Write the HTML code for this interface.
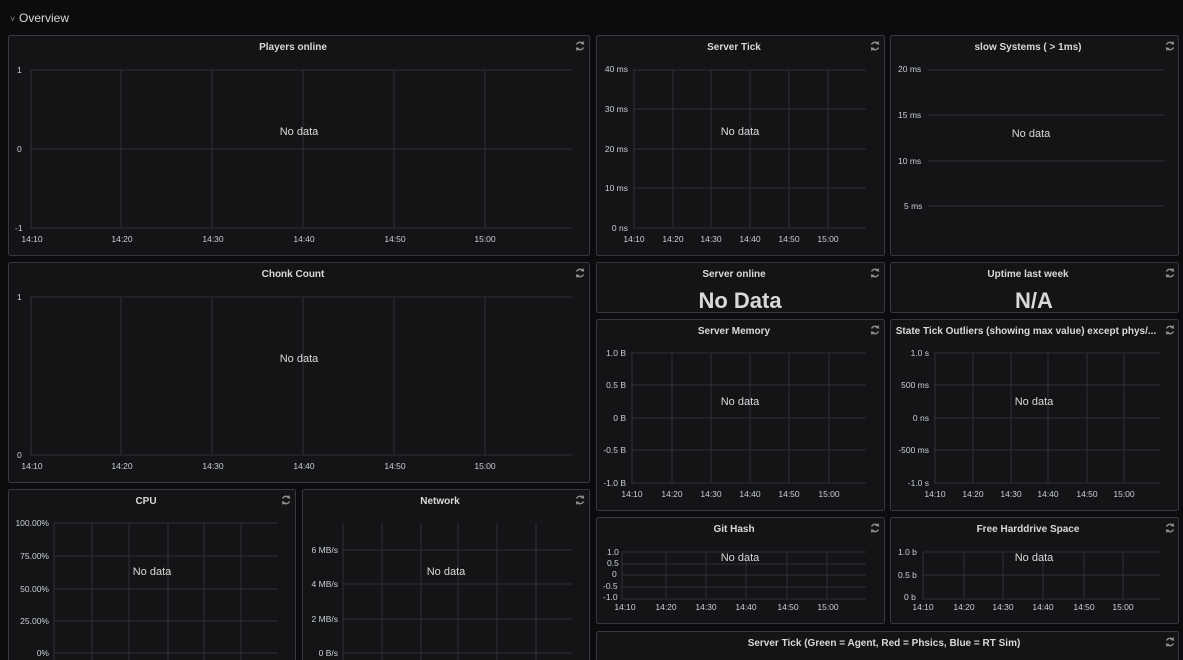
<!DOCTYPE html>
<html><head><meta charset="utf-8"><style>
html,body{margin:0;padding:0;background:#0b0c0e;width:1183px;height:660px;overflow:hidden}
svg{display:block}
text{font-family:"Liberation Sans",sans-serif}
.t{fill:#d8d9da;font-size:10px;font-weight:bold;text-anchor:middle}
.a{fill:#c7d0d9;font-size:8.5px}
.ar{fill:#c7d0d9;font-size:8.5px;text-anchor:end}
.ax{fill:#c7d0d9;font-size:8.5px;text-anchor:middle}
.nd{fill:#d8d9da;font-size:11px;text-anchor:middle}
.p{fill:#141416;stroke:#38393d;stroke-width:1}
.g line{stroke:#303135;stroke-width:1}
.big{fill:#d8d9da;font-size:22px;font-weight:bold;text-anchor:middle}
.r{fill:none;stroke:#8e8e8e;stroke-width:1.4}
</style></head><body>
<svg width="1183" height="660" xmlns="http://www.w3.org/2000/svg">
<defs>
<g id="ref"><path class="r" d="M-3.5,-1.5 A4,4 0 0 1 3,-2.5 M3.5,1.5 A4,4 0 0 1 -3,2.5"/><path d="M3.5,-5 L4.3,-1.2 L0.3,-2 Z M-3.5,5 L-4.3,1.2 L-0.3,2 Z" fill="#8e8e8e"/></g>
</defs>
<text x="10" y="22" fill="#8e8e8e" font-size="9">˅</text>
<text x="19" y="22" fill="#d8d9da" font-size="12" font-family="Liberation Sans">Overview</text>

<rect class="p" x="8.5" y="35.5" width="581" height="220" rx="2"/>
<text class="t" x="293" y="50">Players online</text><use href="#ref" x="580" y="46"/>
<g class="g"><line x1="30" y1="70" x2="572" y2="70"/><line x1="30" y1="149" x2="572" y2="149"/><line x1="30" y1="228" x2="572" y2="228"/>
<line x1="31" y1="70" x2="31" y2="228"/><line x1="121" y1="70" x2="121" y2="228"/><line x1="212" y1="70" x2="212" y2="228"/><line x1="303" y1="70" x2="303" y2="228"/><line x1="394" y1="70" x2="394" y2="228"/><line x1="485" y1="70" x2="485" y2="228"/></g>
<text class="a" x="17" y="73">1</text><text class="a" x="17" y="152">0</text><text class="a" x="15" y="231">-1</text>
<text class="ax" x="32" y="242">14:10</text><text class="ax" x="122" y="242">14:20</text><text class="ax" x="213" y="242">14:30</text><text class="ax" x="304" y="242">14:40</text><text class="ax" x="395" y="242">14:50</text><text class="ax" x="485" y="242">15:00</text>
<text class="nd" x="299" y="135">No data</text>

<rect class="p" x="596.5" y="35.5" width="288" height="220" rx="2"/>
<text class="t" x="734" y="50">Server Tick</text><use href="#ref" x="875" y="46"/>
<g class="g"><line x1="633" y1="70" x2="866" y2="70"/><line x1="633" y1="109" x2="866" y2="109"/><line x1="633" y1="149" x2="866" y2="149"/><line x1="633" y1="188" x2="866" y2="188"/><line x1="633" y1="228" x2="866" y2="228"/>
<line x1="634" y1="70" x2="634" y2="228"/><line x1="673" y1="70" x2="673" y2="228"/><line x1="711" y1="70" x2="711" y2="228"/><line x1="750" y1="70" x2="750" y2="228"/><line x1="789" y1="70" x2="789" y2="228"/><line x1="828" y1="70" x2="828" y2="228"/></g>
<text class="ar" x="628" y="72">40 ms</text><text class="ar" x="628" y="112">30 ms</text><text class="ar" x="628" y="152">20 ms</text><text class="ar" x="628" y="191">10 ms</text><text class="ar" x="628" y="231">0 ns</text>
<text class="ax" x="634" y="242">14:10</text><text class="ax" x="673" y="242">14:20</text><text class="ax" x="711" y="242">14:30</text><text class="ax" x="750" y="242">14:40</text><text class="ax" x="789" y="242">14:50</text><text class="ax" x="828" y="242">15:00</text>
<text class="nd" x="740" y="135">No data</text>

<rect class="p" x="890.5" y="35.5" width="288" height="220" rx="2"/>
<text class="t" x="1028" y="50">slow Systems ( &gt; 1ms)</text><use href="#ref" x="1170" y="46"/>
<g class="g"><line x1="928" y1="70" x2="1165" y2="70"/><line x1="928" y1="115" x2="1165" y2="115"/><line x1="928" y1="161" x2="1165" y2="161"/><line x1="928" y1="206" x2="1165" y2="206"/></g>
<text class="a" x="898" y="72">20 ms</text><text class="a" x="898" y="118">15 ms</text><text class="a" x="898" y="164">10 ms</text><text class="a" x="904" y="209">5 ms</text>
<text class="nd" x="1031" y="137">No data</text>

<rect class="p" x="8.5" y="262.5" width="581" height="220" rx="2"/>
<text class="t" x="293" y="277">Chonk Count</text><use href="#ref" x="580" y="273"/>
<g class="g"><line x1="30" y1="297" x2="572" y2="297"/><line x1="30" y1="455" x2="572" y2="455"/>
<line x1="31" y1="297" x2="31" y2="455"/><line x1="121" y1="297" x2="121" y2="455"/><line x1="212" y1="297" x2="212" y2="455"/><line x1="303" y1="297" x2="303" y2="455"/><line x1="394" y1="297" x2="394" y2="455"/><line x1="485" y1="297" x2="485" y2="455"/></g>
<text class="a" x="17" y="300">1</text><text class="a" x="17" y="458">0</text>
<text class="ax" x="32" y="469">14:10</text><text class="ax" x="122" y="469">14:20</text><text class="ax" x="213" y="469">14:30</text><text class="ax" x="304" y="469">14:40</text><text class="ax" x="395" y="469">14:50</text><text class="ax" x="485" y="469">15:00</text>
<text class="nd" x="299" y="362">No data</text>

<rect class="p" x="596.5" y="262.5" width="288" height="50" rx="2"/>
<text class="t" x="734" y="277">Server online</text><use href="#ref" x="875" y="273"/>
<text class="big" x="740" y="308">No Data</text>
<rect class="p" x="890.5" y="262.5" width="288" height="50" rx="2"/>
<text class="t" x="1028" y="277">Uptime last week</text><use href="#ref" x="1170" y="273"/>
<text class="big" x="1034" y="308">N/A</text>

<rect class="p" x="596.5" y="319.5" width="288" height="191" rx="2"/>
<text class="t" x="734" y="334">Server Memory</text><use href="#ref" x="875" y="330"/>
<g class="g"><line x1="631" y1="353" x2="866" y2="353"/><line x1="631" y1="385" x2="866" y2="385"/><line x1="631" y1="418" x2="866" y2="418"/><line x1="631" y1="450" x2="866" y2="450"/><line x1="631" y1="483" x2="866" y2="483"/>
<line x1="632" y1="353" x2="632" y2="483"/><line x1="672" y1="353" x2="672" y2="483"/><line x1="711" y1="353" x2="711" y2="483"/><line x1="750" y1="353" x2="750" y2="483"/><line x1="789" y1="353" x2="789" y2="483"/><line x1="829" y1="353" x2="829" y2="483"/></g>
<text class="ar" x="626" y="356">1.0 B</text><text class="ar" x="626" y="388">0.5 B</text><text class="ar" x="626" y="421">0 B</text><text class="ar" x="626" y="453">-0.5 B</text><text class="ar" x="626" y="486">-1.0 B</text>
<text class="ax" x="632" y="497">14:10</text><text class="ax" x="672" y="497">14:20</text><text class="ax" x="711" y="497">14:30</text><text class="ax" x="750" y="497">14:40</text><text class="ax" x="789" y="497">14:50</text><text class="ax" x="829" y="497">15:00</text>
<text class="nd" x="740" y="405">No data</text>

<rect class="p" x="890.5" y="319.5" width="288" height="191" rx="2"/>
<text class="t" x="1026" y="334">State Tick Outliers (showing max value) except phys/...</text><use href="#ref" x="1170" y="330"/>
<g class="g"><line x1="934" y1="353" x2="1160" y2="353"/><line x1="934" y1="385" x2="1160" y2="385"/><line x1="934" y1="418" x2="1160" y2="418"/><line x1="934" y1="450" x2="1160" y2="450"/><line x1="934" y1="483" x2="1160" y2="483"/>
<line x1="935" y1="353" x2="935" y2="483"/><line x1="973" y1="353" x2="973" y2="483"/><line x1="1011" y1="353" x2="1011" y2="483"/><line x1="1048" y1="353" x2="1048" y2="483"/><line x1="1087" y1="353" x2="1087" y2="483"/><line x1="1124" y1="353" x2="1124" y2="483"/></g>
<text class="ar" x="929" y="356">1.0 s</text><text class="ar" x="929" y="388">500 ms</text><text class="ar" x="929" y="421">0 ns</text><text class="ar" x="929" y="453">-500 ms</text><text class="ar" x="929" y="486">-1.0 s</text>
<text class="ax" x="935" y="497">14:10</text><text class="ax" x="973" y="497">14:20</text><text class="ax" x="1011" y="497">14:30</text><text class="ax" x="1048" y="497">14:40</text><text class="ax" x="1087" y="497">14:50</text><text class="ax" x="1124" y="497">15:00</text>
<text class="nd" x="1034" y="405">No data</text>

<rect class="p" x="8.5" y="489.5" width="287" height="180" rx="2"/>
<text class="t" x="146" y="504">CPU</text><use href="#ref" x="286" y="500"/>
<g class="g"><line x1="54" y1="523" x2="278" y2="523"/><line x1="54" y1="556" x2="278" y2="556"/><line x1="54" y1="589" x2="278" y2="589"/><line x1="54" y1="621" x2="278" y2="621"/><line x1="54" y1="653" x2="278" y2="653"/>
<line x1="54" y1="523" x2="54" y2="660"/><line x1="92" y1="523" x2="92" y2="660"/><line x1="129" y1="523" x2="129" y2="660"/><line x1="168" y1="523" x2="168" y2="660"/><line x1="204" y1="523" x2="204" y2="660"/><line x1="241" y1="523" x2="241" y2="660"/></g>
<text class="ar" x="49" y="526">100.00%</text><text class="ar" x="49" y="559">75.00%</text><text class="ar" x="49" y="592">50.00%</text><text class="ar" x="49" y="624">25.00%</text><text class="ar" x="49" y="656">0%</text>
<text class="nd" x="152" y="575">No data</text>

<rect class="p" x="302.5" y="489.5" width="287" height="180" rx="2"/>
<text class="t" x="440" y="504">Network</text><use href="#ref" x="580" y="500"/>
<g class="g"><line x1="343" y1="550" x2="572" y2="550"/><line x1="343" y1="584" x2="572" y2="584"/><line x1="343" y1="619" x2="572" y2="619"/><line x1="343" y1="653" x2="572" y2="653"/>
<line x1="343" y1="523" x2="343" y2="660"/><line x1="382" y1="523" x2="382" y2="660"/><line x1="421" y1="523" x2="421" y2="660"/><line x1="458" y1="523" x2="458" y2="660"/><line x1="497" y1="523" x2="497" y2="660"/><line x1="536" y1="523" x2="536" y2="660"/></g>
<text class="ar" x="338" y="553">6 MB/s</text><text class="ar" x="338" y="587">4 MB/s</text><text class="ar" x="338" y="622">2 MB/s</text><text class="ar" x="338" y="656">0 B/s</text>
<text class="nd" x="446" y="575">No data</text>

<rect class="p" x="596.5" y="517.5" width="288" height="106" rx="2"/>
<text class="t" x="734" y="532">Git Hash</text><use href="#ref" x="875" y="528"/>
<g class="g"><line x1="622" y1="552" x2="866" y2="552"/><line x1="622" y1="564" x2="866" y2="564"/><line x1="622" y1="575" x2="866" y2="575"/><line x1="622" y1="587" x2="866" y2="587"/><line x1="622" y1="599" x2="866" y2="599"/>
<line x1="622" y1="552" x2="622" y2="599"/><line x1="666" y1="552" x2="666" y2="599"/><line x1="706" y1="552" x2="706" y2="599"/><line x1="746" y1="552" x2="746" y2="599"/><line x1="787" y1="552" x2="787" y2="599"/><line x1="827" y1="552" x2="827" y2="599"/></g>
<text class="a" x="607" y="555">1.0</text><text class="a" x="607" y="566">0.5</text><text class="a" x="612" y="577">0</text><text class="a" x="603" y="589">-0.5</text><text class="a" x="603" y="600">-1.0</text>
<text class="ax" x="625" y="610">14:10</text><text class="ax" x="666" y="610">14:20</text><text class="ax" x="706" y="610">14:30</text><text class="ax" x="746" y="610">14:40</text><text class="ax" x="788" y="610">14:50</text><text class="ax" x="828" y="610">15:00</text>
<text class="nd" x="740" y="561">No data</text>

<rect class="p" x="890.5" y="517.5" width="288" height="106" rx="2"/>
<text class="t" x="1028" y="532">Free Harddrive Space</text><use href="#ref" x="1170" y="528"/>
<g class="g"><line x1="923" y1="552" x2="1160" y2="552"/><line x1="923" y1="575" x2="1160" y2="575"/><line x1="923" y1="599" x2="1160" y2="599"/>
<line x1="923" y1="552" x2="923" y2="599"/><line x1="964" y1="552" x2="964" y2="599"/><line x1="1003" y1="552" x2="1003" y2="599"/><line x1="1043" y1="552" x2="1043" y2="599"/><line x1="1084" y1="552" x2="1084" y2="599"/><line x1="1123" y1="552" x2="1123" y2="599"/></g>
<text class="a" x="898" y="555">1.0 b</text><text class="a" x="898" y="578">0.5 b</text><text class="a" x="904" y="600">0 b</text>
<text class="ax" x="923" y="610">14:10</text><text class="ax" x="964" y="610">14:20</text><text class="ax" x="1003" y="610">14:30</text><text class="ax" x="1043" y="610">14:40</text><text class="ax" x="1084" y="610">14:50</text><text class="ax" x="1123" y="610">15:00</text>
<text class="nd" x="1034" y="561">No data</text>

<rect class="p" x="596.5" y="631.5" width="582" height="40" rx="2"/>
<text class="t" x="884" y="646" font-weight="normal">Server Tick (Green = Agent, Red = Phsics, Blue = RT Sim)</text><use href="#ref" x="1170" y="642"/>
</svg>
</body></html>
